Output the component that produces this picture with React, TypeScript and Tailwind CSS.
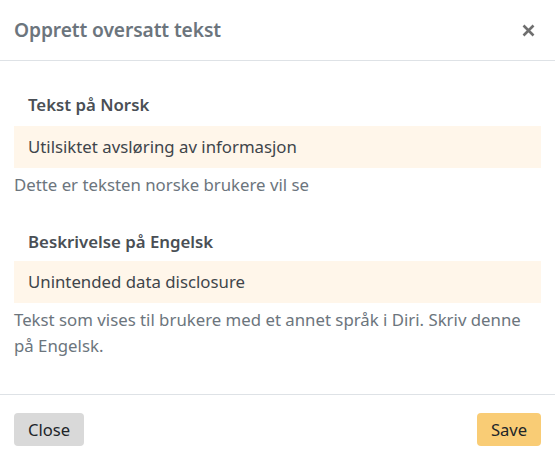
import React from "react";

export default function App() {
  const font = { fontFamily: '"Noto Sans", "Open Sans", sans-serif' };
  return (
    <div className="w-[555px] h-[457px] bg-white overflow-hidden" style={font}>
      <div className="h-[61px] flex items-center justify-between px-[14px] border-b border-[#dee2e6]">
        <h1 className="text-[19.2px] font-semibold text-[#6c757d] tracking-[-0.1px]">Opprett oversatt tekst</h1>
        <button className="text-[#6c757d] mr-[6px]" aria-label="Lukk">
          <svg width="13" height="13" viewBox="0 0 13 13">
            <path d="M1.5 1.5 L11.5 11.5 M11.5 1.5 L1.5 11.5" stroke="#6f6f6f" strokeWidth="2.6" strokeLinecap="butt" />
          </svg>
        </button>
      </div>
      <div className="px-[14px] pt-[32px] h-[334px] border-b border-[#dee2e6] text-[16.8px]">
        <div className="flex flex-col">
          <label className="px-[14px] font-semibold text-[#4a4f55] leading-[24px]">Tekst på Norsk</label>
          <div className="mt-[9px] h-[42px] bg-[#fff6ea] flex items-center px-[14px] text-[#40454a]">
            Utilsiktet avsløring av informasjon
          </div>
          <p className="mt-[5px] text-[#6c757d] leading-[24px]">Dette er teksten norske brukere vil se</p>
        </div>
        <div className="flex flex-col mt-[33px]">
          <label className="px-[14px] font-semibold text-[#4a4f55] leading-[24px]">Beskrivelse på Engelsk</label>
          <div className="mt-[7px] h-[42px] bg-[#fff6ea] flex items-center px-[14px] text-[#40454a]">
            Unintended data disclosure
          </div>
          <p className="mt-[4px] pr-[6px] text-[#6c757d] leading-[26px]">
            Tekst som vises til brukere med et annet språk i Diri. Skriv denne på Engelsk.
          </p>
        </div>
      </div>
      <div className="flex justify-between px-[14px] pt-[18px]">
        <button className="h-[33px] w-[70px] pt-[2px] rounded-[4px] bg-[#d9d9d9] text-[#212529] text-[16.6px]">Close</button>
        <button className="h-[33px] w-[64px] pt-[2px] rounded-[4px] bg-[#f9cc75] text-[#212529] text-[16.6px]">Save</button>
      </div>
    </div>
  );
}
